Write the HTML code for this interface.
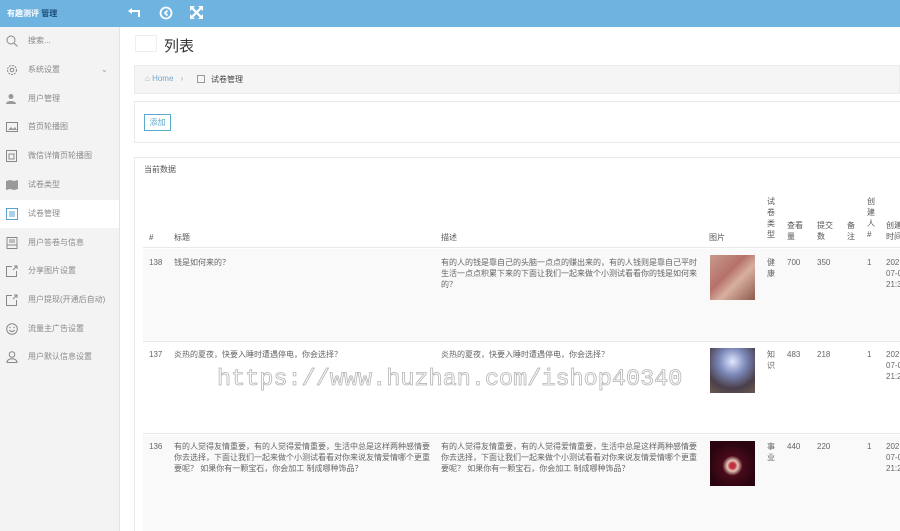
<!DOCTYPE html>
<html><head><meta charset="utf-8">
<style>
*{margin:0;padding:0;box-sizing:border-box}
html{height:531px;overflow:hidden}
body{width:900px;height:531px;overflow:hidden;background:#fff;font-family:"Liberation Sans","Noto Sans CJK SC",sans-serif;color:#676a6c;position:relative;font-size:8px}
.top{position:absolute;left:0;top:0;width:900px;height:27px;background:#6fb3e0}
.logo{position:absolute;left:7px;top:8px;color:#fff;font-size:8px;font-weight:bold}
.logo b{color:#1d4e7a;font-weight:bold}
.side{position:absolute;left:0;top:27px;width:120px;height:504px;background:#f3f3f4;border-right:1px solid #e3e3e3}
.it{position:absolute;left:0;width:119px;height:28px;line-height:28px;padding-left:28px;font-size:8px;color:#8a8a8a}
.it.act{background:#fff}
.ic{position:absolute;left:6px;top:8px;width:12px;height:12px}
.abs{position:absolute}
.panel{position:absolute;left:134px;background:#fff;border:1px solid #e7eaec}
.th{position:absolute;top:0;font-size:8px;color:#555;line-height:11px}
.td{position:absolute;font-size:8px;line-height:11px;color:#666}
.row{position:absolute;left:143px;width:757px}
</style></head><body>
<div class="top">
 <div class="logo">有趣测评 <b>管理</b></div>
 <svg class="abs" style="left:128px;top:7px" width="13" height="12" viewBox="0 0 13 12"><path d="M2 4h9v6" stroke="#fff" stroke-width="2" fill="none"/><path d="M0 4l4-3v6z" fill="#fff"/></svg>
 <svg class="abs" style="left:159px;top:6px" width="14" height="14" viewBox="0 0 14 14"><circle cx="7" cy="7" r="5.5" stroke="#fff" stroke-width="1.8" fill="none"/><path d="M8.5 4.5L6 7l2.5 2.5" stroke="#fff" stroke-width="1.8" fill="none"/></svg>
 <svg class="abs" style="left:190px;top:6px" width="13" height="13" viewBox="0 0 13 13"><path d="M0 0h5L0 5zM13 0v5L8 0zM0 13V8l5 5zM13 13H8l5-5z" fill="#fff"/><path d="M2 2l9 9M11 2l-9 9" stroke="#fff" stroke-width="2.2"/></svg>
</div>
<div class="side">
 <div class="it" style="top:0">搜索...<svg class="ic" viewBox="0 0 12 12"><circle cx="5" cy="5" r="4" stroke="#888" fill="none"/><path d="M8 8l3.5 3.5" stroke="#888"/></svg></div>
 <div class="it" style="top:29px">系统设置<span class="abs" style="left:101px;color:#999">⌄</span><svg class="ic" viewBox="0 0 12 12"><circle cx="6" cy="6" r="4.5" stroke="#888" fill="none" stroke-dasharray="2 1"/><circle cx="6" cy="6" r="1.8" stroke="#888" fill="none"/></svg></div>
 <div class="it" style="top:58px">用户管理<svg class="ic" viewBox="0 0 12 12"><circle cx="5" cy="3.5" r="2.5" fill="#999"/><path d="M0 11c0-4 10-4 10 0z" fill="#999"/></svg></div>
 <div class="it" style="top:86px">首页轮播图<svg class="ic" viewBox="0 0 12 12"><rect x="0.5" y="1.5" width="11" height="9" stroke="#888" fill="none"/><path d="M2 9l3-3 2 2 2-2 2 3z" fill="#999"/></svg></div>
 <div class="it" style="top:115px">微信详情页轮播图<svg class="ic" viewBox="0 0 12 12"><rect x="0.5" y="0.5" width="10" height="11" stroke="#888" fill="none"/><rect x="3" y="4" width="5" height="5" stroke="#888" fill="none"/></svg></div>
 <div class="it" style="top:144px">试卷类型<svg class="ic" viewBox="0 0 12 12"><path d="M0 2l4-1 4 1 4-1v9l-4 1-4-1-4 1z" fill="#999"/></svg></div>
 <div class="it act" style="top:173px">试卷管理<svg class="ic" viewBox="0 0 12 12"><rect x="0.5" y="0.5" width="11" height="11" stroke="#5aa0d0" fill="none"/><path d="M3 4h6M3 6h6M3 8h6" stroke="#5aa0d0"/></svg></div>
 <div class="it" style="top:202px">用户答卷与信息<svg class="ic" viewBox="0 0 12 12"><rect x="1" y="0.5" width="10" height="11" stroke="#888" fill="none"/><path d="M3 3h6M3 5h6M1 8h10" stroke="#888"/></svg></div>
 <div class="it" style="top:230px">分享图片设置<svg class="ic" viewBox="0 0 12 12"><path d="M6 1.5H0.5v10h10V6" stroke="#888" fill="none"/><path d="M7 5l4-4M8 1h3v3" stroke="#888" fill="none"/></svg></div>
 <div class="it" style="top:259px">用户提现(开通后自动)<svg class="ic" viewBox="0 0 12 12"><path d="M6 1.5H0.5v10h10V6" stroke="#888" fill="none"/><path d="M7 5l4-4M8 1h3v3" stroke="#888" fill="none"/></svg></div>
 <div class="it" style="top:288px">流量主广告设置<svg class="ic" viewBox="0 0 12 12"><circle cx="6" cy="6" r="5.3" stroke="#888" fill="none"/><path d="M3.5 7c1 2 4 2 5 0" stroke="#888" fill="none"/><circle cx="4" cy="4.5" r=".7" fill="#888"/><circle cx="8" cy="4.5" r=".7" fill="#888"/></svg></div>
 <div class="it" style="top:316px">用户默认信息设置<svg class="ic" viewBox="0 0 12 12"><circle cx="6" cy="3.5" r="2.8" stroke="#888" fill="none"/><path d="M1 11.5c0-5 10-5 10 0z" stroke="#888" fill="none"/></svg></div>
</div>

<div class="abs" style="left:135px;top:35px;width:22px;height:17px;border:1px solid #eee;background:#fff"></div>
<div class="abs" style="left:164px;top:35px;font-size:15px;color:#333">列表</div>
<div class="abs" style="left:134px;top:65px;width:766px;height:29px;background:#f5f5f6;border:1px solid #ececec"></div>
<div class="abs" style="left:145px;top:74px;font-size:8px;color:#6fa7cf"><span style="color:#aaa">⌂</span> Home <span style="color:#aaa;margin:0 5px">›</span></div>
<div class="abs" style="left:197px;top:75px;width:8px;height:8px;border:1px solid #999"></div>
<div class="abs" style="left:211px;top:74px;font-size:8px;color:#444">试卷管理</div>

<div class="panel" style="top:101px;width:770px;height:42px"></div>
<div class="abs" style="left:144px;top:114px;width:27px;height:17px;border:1px solid #5aaacb;color:#5aaacb;font-size:8px;line-height:15px;text-align:center">添加</div>

<div class="panel" style="top:157px;width:770px;height:374px;border-bottom:none"></div>
<div class="abs" style="left:144px;top:164px;font-size:8px;color:#555">当前数据</div>

<div class="row" style="top:196px;height:52px;border-bottom:1px solid #e7eaec">
 <div class="th" style="left:6px;top:36px">#</div>
 <div class="th" style="left:31px;top:36px">标题</div>
 <div class="th" style="left:298px;top:36px">描述</div>
 <div class="th" style="left:566px;top:36px">图片</div>
 <div class="th" style="left:624px;width:9px;top:0">试卷类型</div>
 <div class="th" style="left:644px;width:18px;top:24px">查看量</div>
 <div class="th" style="left:674px;width:18px;top:24px">提交数</div>
 <div class="th" style="left:704px;width:9px;top:24px">备注</div>
 <div class="th" style="left:724px;width:9px;top:0">创建人#</div>
 <div class="th" style="left:743px;width:18px;top:24px">创建时间</div>
</div>

<div class="row" style="top:249px;height:93px;background:#f9f9f9;border-bottom:1px solid #e7eaec">
 <div class="td" style="left:6px;top:8px">138</div>
 <div class="td" style="left:31px;top:8px">钱是如何来的？</div>
 <div class="td" style="left:298px;top:8px;width:260px">有的人的钱是靠自己的头脑一点点的赚出来的，有的人钱则是靠自己平时生活一点点积累下来的下面让我们一起来做个小测试看看你的钱是如何来的？</div>
 <div class="abs" style="left:567px;top:6px;width:45px;height:45px;background:linear-gradient(135deg,#c99a8c,#b5716a 40%,#d8b0a0 60%,#8d5a4e)"></div>
 <div class="td" style="left:624px;top:8px;width:9px">健康</div>
 <div class="td" style="left:644px;top:8px">700</div>
 <div class="td" style="left:674px;top:8px">350</div>
 <div class="td" style="left:724px;top:8px">1</div>
 <div class="td" style="left:743px;top:8px;width:16px;overflow:hidden;white-space:nowrap">2021-<br>07-0<br>21:3</div>
</div>

<div class="row" style="top:343px;height:91px;background:#fff;border-bottom:1px solid #e7eaec">
 <div class="td" style="left:6px;top:6px">137</div>
 <div class="td" style="left:31px;top:6px">炎热的夏夜，快要入睡时遭遇停电，你会选择？</div>
 <div class="td" style="left:298px;top:6px">炎热的夏夜，快要入睡时遭遇停电，你会选择？</div>
 <div class="abs" style="left:567px;top:5px;width:45px;height:45px;background:radial-gradient(circle at 50% 30%,#dfe8ff,#7a87b8 35%,#4a3f4a 70%,#6b5a50)"></div>
 <div class="td" style="left:624px;top:6px;width:9px">知识</div>
 <div class="td" style="left:644px;top:6px">483</div>
 <div class="td" style="left:674px;top:6px">218</div>
 <div class="td" style="left:724px;top:6px">1</div>
 <div class="td" style="left:743px;top:6px;width:16px;overflow:hidden;white-space:nowrap">2021-<br>07-0<br>21:2</div>
</div>

<div class="row" style="top:435px;height:96px;background:#f9f9f9">
 <div class="td" style="left:6px;top:6px">136</div>
 <div class="td" style="left:31px;top:6px;width:262px">有的人觉得友情重要，有的人觉得爱情重要，生活中总是这样两种感情要你去选择，下面让我们一起来做个小测试看看对你来说友情爱情哪个更重要呢？ 如果你有一颗宝石，你会加工 制成哪种饰品？</div>
 <div class="td" style="left:298px;top:6px;width:262px">有的人觉得友情重要，有的人觉得爱情重要，生活中总是这样两种感情要你去选择，下面让我们一起来做个小测试看看对你来说友情爱情哪个更重要呢？ 如果你有一颗宝石，你会加工 制成哪种饰品？</div>
 <div class="abs" style="left:567px;top:6px;width:45px;height:45px;background:radial-gradient(circle at 50% 55%,#c23040 8%,#e8c8b8 16%,#4a0a1a 30%,#2a0510 70%)"></div>
 <div class="td" style="left:624px;top:6px;width:9px">事业</div>
 <div class="td" style="left:644px;top:6px">440</div>
 <div class="td" style="left:674px;top:6px">220</div>
 <div class="td" style="left:724px;top:6px">1</div>
 <div class="td" style="left:743px;top:6px;width:16px;overflow:hidden;white-space:nowrap">2021-<br>07-0<br>21:2</div>
</div>

<div class="abs" style="left:217px;top:366px;font-family:'Liberation Mono',monospace;font-size:23.5px;color:rgba(255,255,255,0.6);-webkit-text-stroke:0.8px #b5b5b5;white-space:nowrap">https://www.huzhan.com/ishop40340</div>
</body></html>
